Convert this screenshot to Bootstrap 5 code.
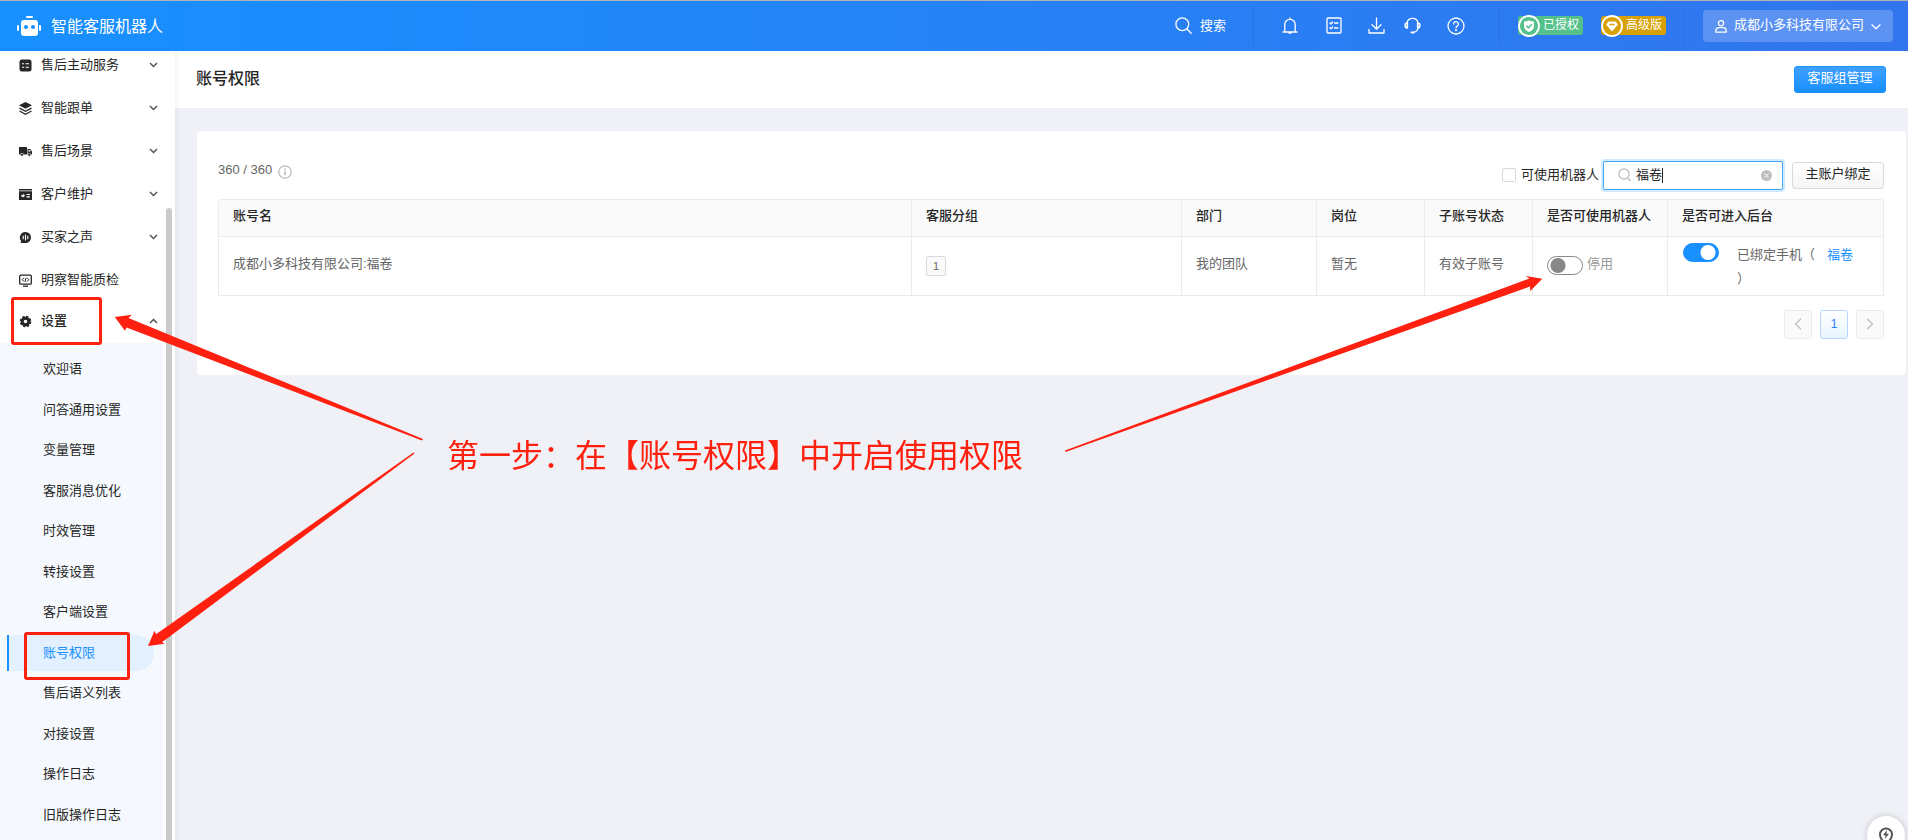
<!DOCTYPE html>
<html lang="zh-CN">
<head>
<meta charset="utf-8">
<meta name="viewport" content="width=device-width, initial-scale=1">
<title>账号权限 - 智能客服机器人</title>
<link href="https://cdn.jsdelivr.net/npm/bootstrap@5.3.0/dist/css/bootstrap.min.css" rel="stylesheet">
<style>
  body { font: 13px/20px "Liberation Sans", "Noto Sans CJK SC", sans-serif; color: #262626; background: #eff1f6; overflow: hidden; }
  svg { display: block; flex: none; }
  .stroke-icon { fill: none; stroke: currentColor; stroke-width: 1.3; stroke-linecap: round; stroke-linejoin: round; }

  .topbar { height: 51px; border-top: 1px solid #b3b3b3; background: linear-gradient(90deg, #1890ff, #3275ed); color: #fff; padding-right: 15px; }
  .brand { font-size: 16px; color: #fff; padding: 2px 0 0 16px; gap: 9px; }
  .split { width: 1px; height: 36px; background: #2468dc; opacity: .6; }
  .bar-btn { border: 0; background: none; color: #fff; padding: 0; width: 20px; display: flex; justify-content: center; }
  .chip { height: 19px; border-radius: 3px; font-size: 12px; line-height: 19px; padding-right: 4px; gap: 3px; color: #fff; }
  .chip svg { margin: -2px 0; }
  .account { height: 32px; width: 190px; border: 0; border-radius: 4px; background: #5c93f2; color: #fff; padding: 0 12px 2px; }

  .side { width: 175px; background: #fff; box-shadow: 1px 0 4px rgba(0, 21, 41, .08); overflow: hidden; z-index: 1; }
  .menu { width: 163px; margin-top: -7px; }
  .menu-row { height: 43px; padding: 0 5px 0 19px; color: #262626; text-decoration: none; }
  .menu-row svg:first-child { margin-right: 9px; }
  .menu-row.opened { height: 41px; padding-bottom: 2px; font-weight: 500; }
  .submenu { background: #f5f9fd; padding: 6px 0; display: grid; grid-auto-rows: 1fr; min-height: 498px; align-items: center; }
  .submenu a { height: 36px; line-height: 36px; margin: 0 9px 0 7px; padding-left: 36px; color: #262626; text-decoration: none; }
  .submenu a.current { background: #e2f0ff; color: #1890ff; border-left: 2px solid #1890ff; padding-left: 34px; border-radius: 0 18px 18px 0; }
  .thumb { width: 6px; margin: 157px 3px 0; background: #cacaca; border-radius: 3px 3px 0 0; }

  .titlebar { height: 57px; background: #fff; padding: 0 22px 0 21px; }
  .titlebar h1 { font-size: 16px; line-height: 24px; font-weight: 500; margin: 0; }
  .btn-plain, .btn-main { width: 92px; height: 27px; padding: 0 0 2px; font-size: 13px; line-height: 20px; border-radius: 3px; }
  .btn-main { color: #fff; background: linear-gradient(#40a0ff, #1890ff); border: 1px solid #1890ff; }
  .btn-plain { color: #262626; background: linear-gradient(#fff, #f5f5f5); border: 1px solid #d9d9d9; }
  .panel { background: #fff; border-radius: 4px; margin: 23px 2px 0 22px; padding: 30px 22px 36px 21px; }
  .tools { height: 29px; margin-bottom: 9px; }
  .quota { color: #666; padding-bottom: 11px; gap: 6px; }
  .tick.form-check-input { width: 14px; height: 14px; margin: 0 5px 0 0; border: 1px solid #d9d9d9; border-radius: 2px; }
  .search { width: 180px; height: 29px; border: 1px solid #40a9ff; border-radius: 2px; box-shadow: 0 0 0 2px #d1e9ff; padding: 0 10px 0 14px; background: #fff; }
  .search input { border: 0; outline: 0; padding: 0 0 1px; flex: 1; min-width: 0; font-size: 13px; line-height: 20px; color: #262626; background: linear-gradient(#262626, #262626) 26px 3px / 1px 15px no-repeat; }

  .grid-table { table-layout: fixed; width: 100%; border-collapse: separate; border-spacing: 0; border: solid #ebebeb; border-width: 1px 0 0 1px; border-radius: 4px 4px 0 0; }
  .grid-table th, .grid-table td { border: solid #ebebeb; border-width: 0 1px 1px 0; padding: 0 0 2px 14px; text-align: left; white-space: nowrap; }
  .grid-table th { height: 37px; background: #fafafa; font-weight: 500; padding-bottom: 4px; }
  .grid-table td { height: 59px; color: #666; padding-bottom: 4px; }
  .grid-table td.bind { vertical-align: top; padding: 6px 20px 0 15px; }
  .bind-text { line-height: 24px; white-space: normal; }
  .bind-text a { color: #1890ff; text-decoration: none; margin-left: 12px; }
  .group-count { display: inline-block; width: 20px; height: 20px; line-height: 18px; font-size: 11px; text-align: center; color: #666; background: #fafafa; border: 1px solid #d9d9d9; border-radius: 2px; vertical-align: middle; margin-top: 4px; }
  .flip.form-check-input { width: 36px; height: 19px; margin: 0; border-radius: 10px; border: 1px solid #888; box-shadow: none; background: radial-gradient(circle at 10px 50%, #888 7px, transparent 8px) #fff; }
  .flip.form-check-input:checked { border-color: #1890ff; background: radial-gradient(circle at 24px 50%, #fff 7px, transparent 8px) #1890ff; }
  .pages { gap: 8px; margin-top: 14px; }
  .pages button { width: 28px; height: 29px; padding: 0; border: 1px solid #ebebeb; border-radius: 3px; background: #fafafa; color: #bfbfbf; display: flex; align-items: center; justify-content: center; font-size: 12px; }
  .pages .on { border-color: #b5d4ff; background: linear-gradient(#fff, #e8f4ff); color: #2f80ff; }

  .notes { position: absolute; inset: 0; z-index: 5; pointer-events: none; color: #ff2010; overflow: hidden; }
  .notes p { position: absolute; left: 447px; top: 432px; font-size: 32px; line-height: 48px; margin: 0; white-space: nowrap; }
  .helper { position: fixed; right: 3px; bottom: -14px; width: 38px; height: 38px; border: 0; border-radius: 50%; background: #fff; color: #555; box-shadow: 0 0 6px rgba(0, 0, 0, .2); padding: 10px; z-index: 4; }
</style>
</head>
<body class="d-flex flex-column vh-100">

<header class="topbar d-flex align-items-center">
  <a class="brand d-flex align-items-center text-decoration-none me-auto" href="#">
    <svg width="26" height="22" viewBox="0 0 26 22" fill="#fff"><rect x="10" y="0" width="7" height="2" rx="1"/><rect x="5" y="4" width="17" height="16" rx="3"/><rect x="1" y="9" width="2" height="6" rx="1"/><rect x="23" y="9" width="2" height="6" rx="1"/><circle cx="10" cy="11" r="2" fill="#1890ff"/><circle cx="17" cy="11" r="2" fill="#1890ff"/></svg>
    <span>智能客服机器人</span>
  </a>
  <button class="bar-btn w-auto align-items-center gap-2" type="button">
    <svg class="stroke-icon" width="17" height="17" viewBox="0 0 17 17"><circle cx="7.3" cy="7.3" r="6.4"/><path d="M12 12l4.2 4.2"/></svg>
    <span>搜索</span>
  </button>
  <div class="split" style="margin-left:27px"></div>
  <button class="bar-btn" type="button" aria-label="通知" style="margin-left:26px">
    <svg class="stroke-icon" width="16" height="18" viewBox="0 0 16 18"><path d="M1 15h14M2.800 15V7.500a5.200 5.200 0 0 1 10.400 0V15M6.600 15.300a1.500 1.500 0 0 0 2.800 0M8 1v1"/></svg>
  </button>
  <button class="bar-btn" type="button" aria-label="任务" style="margin-left:24px">
    <svg class="stroke-icon" width="16" height="17" viewBox="0 0 16 17"><rect x="1" y="1" width="14" height="15" rx="1"/><path d="M4 6l1 1 1.600-2M8.500 6H12M4 10.800l1 1 1.600-2M8.500 11H12"/></svg>
  </button>
  <button class="bar-btn" type="button" aria-label="下载" style="margin-left:23px">
    <svg class="stroke-icon" width="17" height="17" viewBox="0 0 17 17"><path d="M8.500 1v11M4 7.800l4.500 4.400L13 7.800M1 12.500V16h15v-3.500"/></svg>
  </button>
  <button class="bar-btn" type="button" aria-label="客服" style="margin-left:16px">
    <svg class="stroke-icon" width="17" height="17" viewBox="0 0 17 17"><path d="M3 6a5.600 5.600 0 0 1 11 0M14 11c-.4 2.500-2 4-4.500 4.300"/><path d="M3.500 6v5H2.500a2 2 0 0 1-1.500-2V8a2 2 0 0 1 1.500-2zM13.500 6v5h1a2 2 0 0 0 1.500-2V8a2 2 0 0 0-1.500-2z" fill="#fff" fill-opacity=".6"/><path d="M7.500 15.500h2" stroke-width="2"/></svg>
  </button>
  <button class="bar-btn" type="button" aria-label="帮助" style="margin-left:23px">
    <svg class="stroke-icon" width="18" height="18" viewBox="0 0 18 18"><circle cx="9" cy="9" r="8"/><path d="M6.600 7a2.400 2.400 0 1 1 3.600 2.100c-.8.500-1.200.9-1.200 1.700"/><path d="M9 13v.3" stroke-width="1.800"/></svg>
  </button>
  <div class="split" style="margin:0 18px 0 33px"></div>
  <div class="chip d-flex align-items-center" style="background:#54c08a">
    <svg width="22" height="22" viewBox="0 0 22 22"><circle cx="11" cy="11" r="10" fill="#54c08a" stroke="#fff" stroke-width="1.800"/><path d="M11 5.500l5 1.300v4.500c0 2.700-2 4.500-5 5.700-3-1.200-5-3-5-5.700V6.800z" fill="#fff"/><path d="M8.500 10.800l2 2 3.300-3.500" fill="none" stroke="#54c08a" stroke-width="1.500"/></svg>
    <span>已授权</span>
  </div>
  <div class="chip d-flex align-items-center" style="background:#d9a004;margin:0 18px">
    <svg width="22" height="22" viewBox="0 0 22 22"><circle cx="11" cy="11" r="10" fill="#d9a004" stroke="#fff" stroke-width="1.800"/><path d="M7.500 6.500h7l2.500 3-6 7-6-7z" fill="#fff"/><path d="M8.500 9.500h5" stroke="#d9a004" stroke-width="1.500"/></svg>
    <span>高级版</span>
  </div>
  <div class="split" style="margin-right:18px"></div>
  <button class="account d-flex align-items-center" type="button">
    <svg class="stroke-icon mt-1" width="12" height="13" viewBox="0 0 12 13"><circle cx="6" cy="3.300" r="2.600"/><path d="M.8 12.200v-1.500a3 3 0 0 1 3-3h4.400a3 3 0 0 1 3 3v1.500z"/></svg>
    <span class="mx-auto">成都小多科技有限公司</span>
    <svg class="stroke-icon mt-1" width="10" height="6" viewBox="0 0 10 6"><path d="M1 .8l4 4 4-4"/></svg>
  </button>
</header>

<div class="d-flex flex-grow-1" style="min-height:0">
  <aside class="side d-flex flex-shrink-0">
    <nav class="menu">
      <a class="menu-row d-flex align-items-center" href="#"><svg width="13" height="13" viewBox="0 0 13 13"><rect x="0.500" y="0.500" width="12" height="12" rx="2.500" fill="#262626"/><path d="M3 4.700h2M3 8.300h2M6.500 4.700H10M6.500 8.300H10" stroke="#fff" stroke-width="1.100"/></svg><span class="me-auto">售后主动服务</span><svg width="9" height="6" viewBox="0 0 9 6" fill="none" stroke="#555" stroke-width="1.500"><path d="M1 1l3.500 3.500L8 1"/></svg></a>
      <a class="menu-row d-flex align-items-center" href="#"><svg width="13" height="13" viewBox="0 0 13 13"><path d="M6.500 0L13 3.300 6.500 6.700 0 3.300z" fill="#262626"/><path d="M.5 6.200l6 3.100 6-3.100M.5 9l6 3.200L12.500 9" fill="none" stroke="#262626" stroke-width="1.300"/></svg><span class="me-auto">智能跟单</span><svg width="9" height="6" viewBox="0 0 9 6" fill="none" stroke="#555" stroke-width="1.500"><path d="M1 1l3.500 3.500L8 1"/></svg></a>
      <a class="menu-row d-flex align-items-center" href="#"><svg width="13" height="13" viewBox="0 0 13 13"><path d="M0 2h8v7.500H0zM8.500 4h2.700L13 6.500v3H8.500z" fill="#262626"/><path d="M9.500 5h1.400l1 1.500H9.500z" fill="#fff"/><circle cx="3" cy="9.800" r="1.500" fill="#262626" stroke="#fff" stroke-width=".6"/><circle cx="10.300" cy="9.800" r="1.500" fill="#262626" stroke="#fff" stroke-width=".6"/></svg><span class="me-auto">售后场景</span><svg width="9" height="6" viewBox="0 0 9 6" fill="none" stroke="#555" stroke-width="1.500"><path d="M1 1l3.500 3.500L8 1"/></svg></a>
      <a class="menu-row d-flex align-items-center" href="#"><svg width="13" height="13" viewBox="0 0 13 13" fill="#262626"><path d="M0 1h13v1.500H0zM0 3.300h13V12H0z"/><circle cx="4" cy="7.600" r="1.700" fill="#fff"/><path d="M7.500 6.500H11M7.500 8.800H11" stroke="#fff" stroke-width="1.200"/><path d="M4 7.600V5.500L2 6z"/></svg><span class="me-auto">客户维护</span><svg width="9" height="6" viewBox="0 0 9 6" fill="none" stroke="#555" stroke-width="1.500"><path d="M1 1l3.500 3.500L8 1"/></svg></a>
      <a class="menu-row d-flex align-items-center" href="#"><svg width="13" height="13" viewBox="0 0 13 13"><path d="M6.500 1a5.500 5.500 0 1 1 0 11H1.300l1-1.800A5.500 5.500 0 0 1 6.500 1z" fill="#262626"/><path d="M4.200 4.800v3.400M6.500 3.500v6M8.800 4.800v3.400" stroke="#fff" stroke-width="1.100"/></svg><span class="me-auto">买家之声</span><svg width="9" height="6" viewBox="0 0 9 6" fill="none" stroke="#555" stroke-width="1.500"><path d="M1 1l3.500 3.500L8 1"/></svg></a>
      <a class="menu-row d-flex align-items-center" href="#"><svg width="13" height="13" viewBox="0 0 13 13" fill="none" stroke="#262626"><rect x=".7" y="1.200" width="11.600" height="9" rx="1" stroke-width="1.300"/><path d="M4 12.200h5" stroke-width="1.300"/><path d="M5 3.800L3.200 5.700 5 7.600M8 3.800l1.800 1.900L8 7.600M6 7.800l1-4"/></svg><span class="me-auto">明察智能质检</span></a>
      <a class="menu-row opened d-flex align-items-center" href="#"><svg width="13" height="13" viewBox="0 0 13 13"><circle cx="6.500" cy="6.500" r="3.300" fill="none" stroke="#262626" stroke-width="3"/><circle cx="6.500" cy="6.500" r="5" fill="none" stroke="#262626" stroke-width="1.600" stroke-dasharray="2.400 1.527"/></svg><span class="me-auto">设置</span><svg width="9" height="6" viewBox="0 0 9 6" fill="none" stroke="#555" stroke-width="1.500"><path d="M1 5l3.500-3.500L8 5"/></svg></a>
      <div class="submenu">
        <a href="#">欢迎语</a>
        <a href="#">问答通用设置</a>
        <a href="#">变量管理</a>
        <a href="#">客服消息优化</a>
        <a href="#">时效管理</a>
        <a href="#">转接设置</a>
        <a href="#">客户端设置</a>
        <a class="current" href="#" aria-current="page">账号权限</a>
        <a href="#">售后语义列表</a>
        <a href="#">对接设置</a>
        <a href="#">操作日志</a>
        <a href="#">旧版操作日志</a>
      </div>
    </nav>
    <div class="thumb"></div>
  </aside>

  <main class="flex-grow-1" style="min-width:0">
    <div class="titlebar d-flex align-items-center justify-content-between">
      <h1>账号权限</h1>
      <button class="btn btn-main" type="button">客服组管理</button>
    </div>

    <section class="panel">
      <div class="tools d-flex align-items-center">
        <div class="quota d-flex align-items-center me-auto">
          <span>360 / 360</span>
          <svg class="mt-1" width="14" height="14" viewBox="0 0 14 14" fill="none" stroke="#b8b8b8"><circle cx="7" cy="7" r="6.200" stroke-width="1.200"/><path d="M7 6v4.300M7 3.600v1.300" stroke-width="1.500"/></svg>
        </div>
        <input class="tick form-check-input" type="checkbox" id="usable">
        <label for="usable">可使用机器人</label>
        <div class="search d-flex align-items-center" style="margin-left:4px">
          <svg width="13" height="14" viewBox="0 0 13 14" fill="none" stroke="#b8b8b8" stroke-width="1.200"><circle cx="6" cy="6" r="5.200"/><path d="M9.700 9.900l2.800 3.100"/></svg>
          <input type="text" value="福卷" aria-label="搜索账号" style="margin-left:5px">
          <svg width="11" height="11" viewBox="0 0 11 11"><circle cx="5.500" cy="5.500" r="5.500" fill="#bfbfbf"/><path d="M3.500 3.500l4 4M7.500 3.500l-4 4" stroke="#fff"/></svg>
        </div>
        <button class="btn btn-plain" type="button" style="margin-left:9px">主账户绑定</button>
      </div>

      <table class="grid-table">
        <colgroup><col><col style="width:270px"><col style="width:135px"><col style="width:108px"><col style="width:108px"><col style="width:135px"><col style="width:216px"></colgroup>
        <thead>
          <tr><th>账号名</th><th>客服分组</th><th>部门</th><th>岗位</th><th>子账号状态</th><th>是否可使用机器人</th><th>是否可进入后台</th></tr>
        </thead>
        <tbody>
          <tr>
            <td>成都小多科技有限公司:福卷</td>
            <td><span class="group-count">1</span></td>
            <td>我的团队</td>
            <td>暂无</td>
            <td>有效子账号</td>
            <td>
              <div class="d-flex align-items-center gap-1">
                <input class="flip form-check-input mt-1" type="checkbox" role="switch" id="robot">
                <label for="robot" style="color:#999">停用</label>
              </div>
            </td>
            <td class="bind">
              <div class="d-flex align-items-start">
                <input class="flip form-check-input flex-shrink-0" type="checkbox" role="switch" aria-label="可进入后台" checked>
                <div class="bind-text" style="margin-left:18px">已绑定手机（<a href="#">福卷</a><br>）</div>
              </div>
            </td>
          </tr>
        </tbody>
      </table>

      <nav class="pages d-flex justify-content-end" aria-label="分页">
        <button type="button" aria-label="上一页"><svg width="8" height="12" viewBox="0 0 8 12" fill="none" stroke="currentColor" stroke-width="1.300"><path d="M7 .8L1.500 6 7 11.200"/></svg></button>
        <button class="on" type="button">1</button>
        <button type="button" aria-label="下一页"><svg width="8" height="12" viewBox="0 0 8 12" fill="none" stroke="currentColor" stroke-width="1.300"><path d="M1 .8L6.500 6 1 11.200"/></svg></button>
      </nav>
    </section>
  </main>
</div>

<button class="helper" type="button" aria-label="快捷帮助">
  <svg width="18" height="20" viewBox="0 0 18 20" fill="none" stroke="currentColor" stroke-width="2"><path d="M9 18c-3-2.500-6-5.500-6-9.500a6 6 0 0 1 12 0c0 4-3 7-6 9.500z"/><path d="M9.800 4L6 9.300h2.500L8 13l4-5.300H9.500z" fill="currentColor" stroke="none"/></svg>
</button>

<div class="notes">
  <svg width="1908" height="840" viewBox="0 0 1908 840" fill="#ff2010">
    <g fill="none" stroke="#ff2010" stroke-width="3"><rect x="12.500" y="298.500" width="88" height="45" rx="1.500"/><rect x="25.500" y="633.500" width="103" height="45" rx="1.500"/></g>
    <path d="M114.700 317l17.100-2.300-3.300 3.300L423 439l-1 1.500L126.500 327.500l-1.500 3.200z"/>
    <path d="M148 646l6.500-15.300 1.500 3.600L413.500 452.500l1 1L162 642.300l2.700 1.400z"/>
    <path d="M1542.300 278.700l-16.600-2.700 3.800 2.500L1065 450.500l.5 1.500L1530 286.500l.3 4.500z"/>
  </svg>
  <p>第一步：在【账号权限】中开启使用权限</p>
</div>

<script src="https://cdn.jsdelivr.net/npm/bootstrap@5.3.0/dist/js/bootstrap.bundle.min.js"></script>
</body>
</html>
